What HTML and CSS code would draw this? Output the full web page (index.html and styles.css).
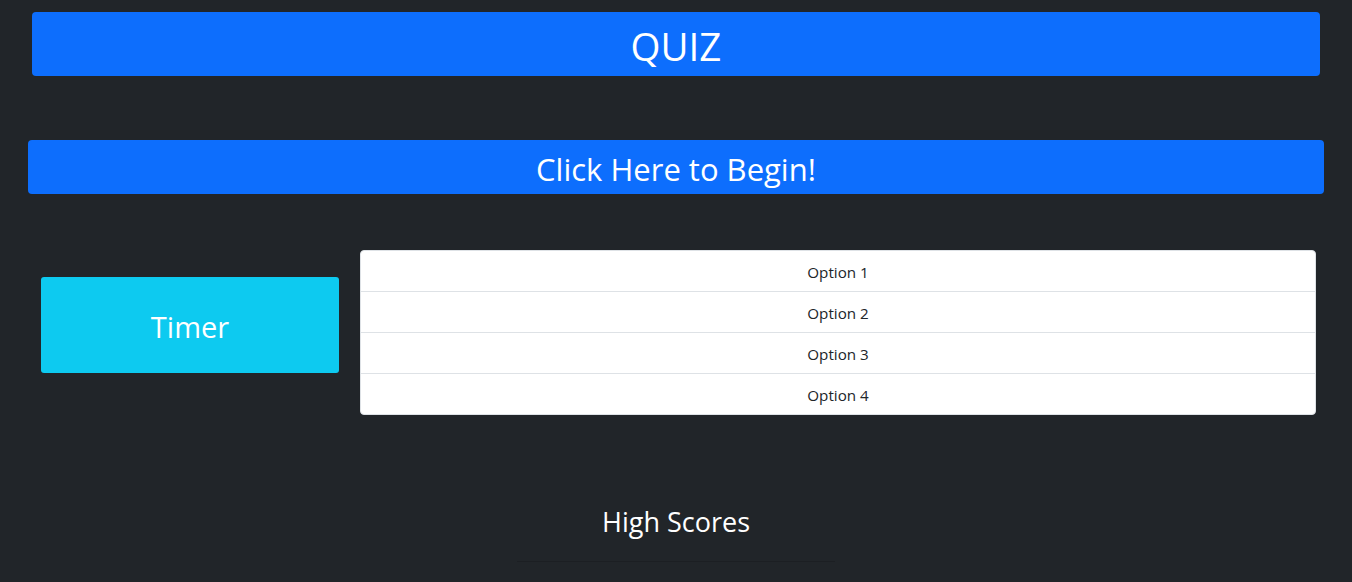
FILE: index.html
```html
<!DOCTYPE html>
<html lang="en">
<head>
<meta charset="utf-8">
<title>Quiz</title>
<link rel="stylesheet" href="styles.css">
</head>
<body>
<div class="page">
  <header class="title-bar">QUIZ</header>
  <button class="begin">Click Here to Begin!</button>
  <section class="quiz-row">
    <div class="timer-col"><div class="timer">Timer</div></div>
    <ul class="options">
      <li>Option 1</li>
      <li>Option 2</li>
      <li>Option 3</li>
      <li>Option 4</li>
    </ul>
  </section>
  <section class="scores">
    <h2>High Scores</h2>
    <div class="score-table"></div>
  </section>
</div>
</body>
</html>
```
FILE: styles.css
```css
* { box-sizing: border-box; }
html, body { margin: 0; padding: 0; }
body {
  background: #212529;
  color: #fff;
  font-family: "Open Sans", "Noto Sans", "Liberation Sans", sans-serif;
  height: 582px;
  overflow: hidden;
}
.page {
  padding: 12px 28px 0 28px;
  display: flex;
  flex-direction: column;
}
.title-bar {
  margin: 0 4px;
  height: 64px;
  background: #0d6efd;
  border-radius: 4px;
  display: flex;
  align-items: center;
  justify-content: center;
  font-size: 38.5px;
  color: #fff;
  padding-top: 3px;
}
.begin {
  margin-top: 64px;
  height: 54px;
  width: 100%;
  background: #0d6efd;
  border: none;
  border-radius: 4px;
  color: #fff;
  font-family: inherit;
  font-size: 31px;
  padding: 3px 0 0;
}
.quiz-row {
  margin-top: 56px;
  display: flex;
  align-items: flex-start;
  padding-left: 13px;
}
.timer-col { width: 298px; margin-top: 27px; }
.timer {
  height: 96px;
  background: #0dcaf0;
  border-radius: 3px;
  display: flex;
  align-items: center;
  justify-content: center;
  font-size: 29px;
  color: #fff;
  padding-top: 2px;
}
.options {
  list-style: none;
  margin: 0 0 0 21px;
  padding: 0;
  width: 956px;
  background: #fff;
  border-radius: 4px;
  border: 1px solid #dee2e6;
}
.options li {
  height: 41px;
  display: flex;
  align-items: center;
  justify-content: center;
  color: #212529;
  font-size: 15.2px;
  border-top: 1px solid #dee2e6;
  padding-top: 1px;
}
.options li:first-child { border-top: none; height: 40px; }
.scores {
  margin-top: 89px;
  display: flex;
  flex-direction: column;
  align-items: center;
}
.scores h2 {
  margin: 0;
  font-weight: 400;
  font-size: 27px;
  line-height: 36px;
}
.score-table {
  margin-top: 21px;
  width: 318px;
  height: 1px;
  background: #1c1f23;
}
```
